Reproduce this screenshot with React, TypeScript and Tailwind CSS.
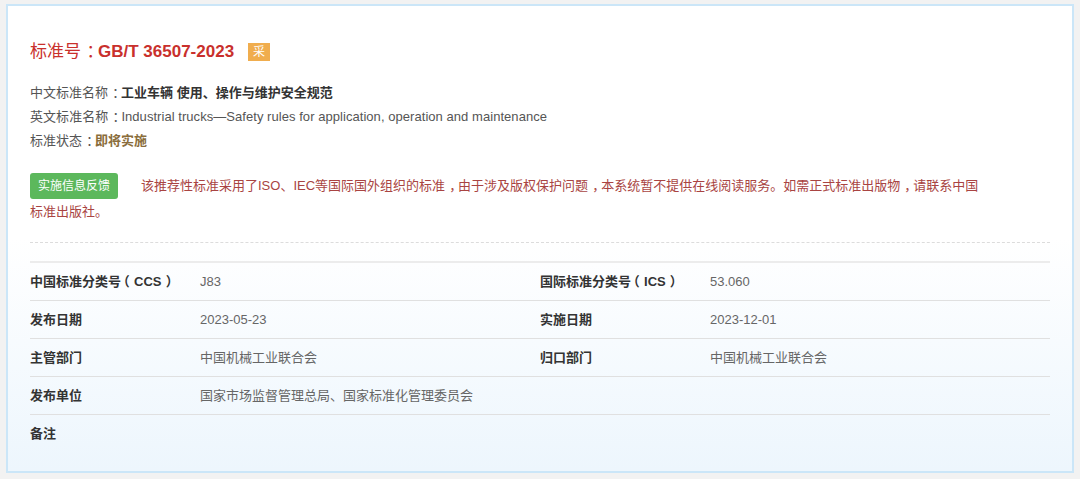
import React from "react";

const font = { fontFamily: '"Liberation Sans", Arial, "Noto Sans CJK SC", sans-serif' };

function T({ s }: { s: string }) {
  const parts = s.split(/([，：（）])/);
  return (
    <>
      {parts.map((p, i) => {
        if (p === "：" || p === "，" || p === "）")
          return <span key={i} className="relative left-[0.32em]">{p}</span>;
        if (p === "（")
          return <span key={i} className="relative left-[-0.32em]">{p}</span>;
        return <React.Fragment key={i}>{p}</React.Fragment>;
      })}
    </>
  );
}

const rows: [string, string, string?, string?][] = [
  ["中国标准分类号（CCS）", "J83", "国际标准分类号（ICS）", "53.060"],
  ["发布日期", "2023-05-23", "实施日期", "2023-12-01"],
  ["主管部门", "中国机械工业联合会", "归口部门", "中国机械工业联合会"],
  ["发布单位", "国家市场监督管理总局、国家标准化管理委员会"],
  ["备注", ""],
];

export default function App() {
  return (
    <div className="w-[1080px] h-[479px] bg-[#f2f2f2] pt-[4px] pl-[6px]" style={font}>
      <div className="w-[1068px] h-[469px] border-2 border-[#cbe6f8] bg-gradient-to-b from-white from-50% to-[#edf6fd] pl-[22px] pt-[34px]">
        <div className="flex items-center h-[24px]">
          <span className="text-[17px] text-[#c9302c]"><T s="标准号：" /></span>
          <span className="text-[17px] font-bold text-[#c9302c]">GB/T 36507-2023</span>
          <span className="ml-[14px] w-[22px] h-[18px] bg-[#f0ad4e] text-white text-[12px] flex items-center justify-center">采</span>
        </div>
        <div className="mt-[17px] text-[13px] text-[#555] leading-[24px]">
          <div><T s="中文标准名称：" /><span className="font-bold text-[#333]">工业车辆 使用、操作与维护安全规范</span></div>
          <div className="tracking-[0.05px]"><T s="英文标准名称：" />Industrial trucks—Safety rules for application, operation and maintenance</div>
          <div><T s="标准状态：" /><span className="font-bold text-[#8a6d3b]">即将实施</span></div>
        </div>
        <p className="mt-[20px] w-[960px] text-[13px] leading-[26px] text-[#a94442]">
          <span className="inline-block align-top h-[26px] w-[88px] mr-[23px] rounded-[3px] bg-[#5cb85c] text-white text-[12px] text-center leading-[26px]">实施信息反馈</span>
          <T s="该推荐性标准采用了ISO、IEC等国际国外组织的标准，由于涉及版权保护问题，本系统暂不提供在线阅读服务。如需正式标准出版物，请联系中国标准出版社。" />
        </p>
        <div className="mt-[17px] w-[1020px] border-t border-dashed border-[#dcdcdc]" />
        <div className="mt-[18px] w-[1020px] border-t-2 border-[#ececec]">
          {rows.map((r, i) => (
            <div
              key={i}
              className={`grid grid-cols-[170px_340px_170px_340px] items-center text-[13px] ${i < rows.length - 1 ? "border-b border-[#e0e0e0] h-[38px]" : "h-[37px]"}`}
            >
              <div className="font-bold text-[#333]"><T s={r[0]} /></div>
              <div className="text-[#666]">{r[1]}</div>
              <div className="font-bold text-[#333]"><T s={r[2] ?? ""} /></div>
              <div className="text-[#666]">{r[3] ?? ""}</div>
            </div>
          ))}
        </div>
      </div>
    </div>
  );
}
